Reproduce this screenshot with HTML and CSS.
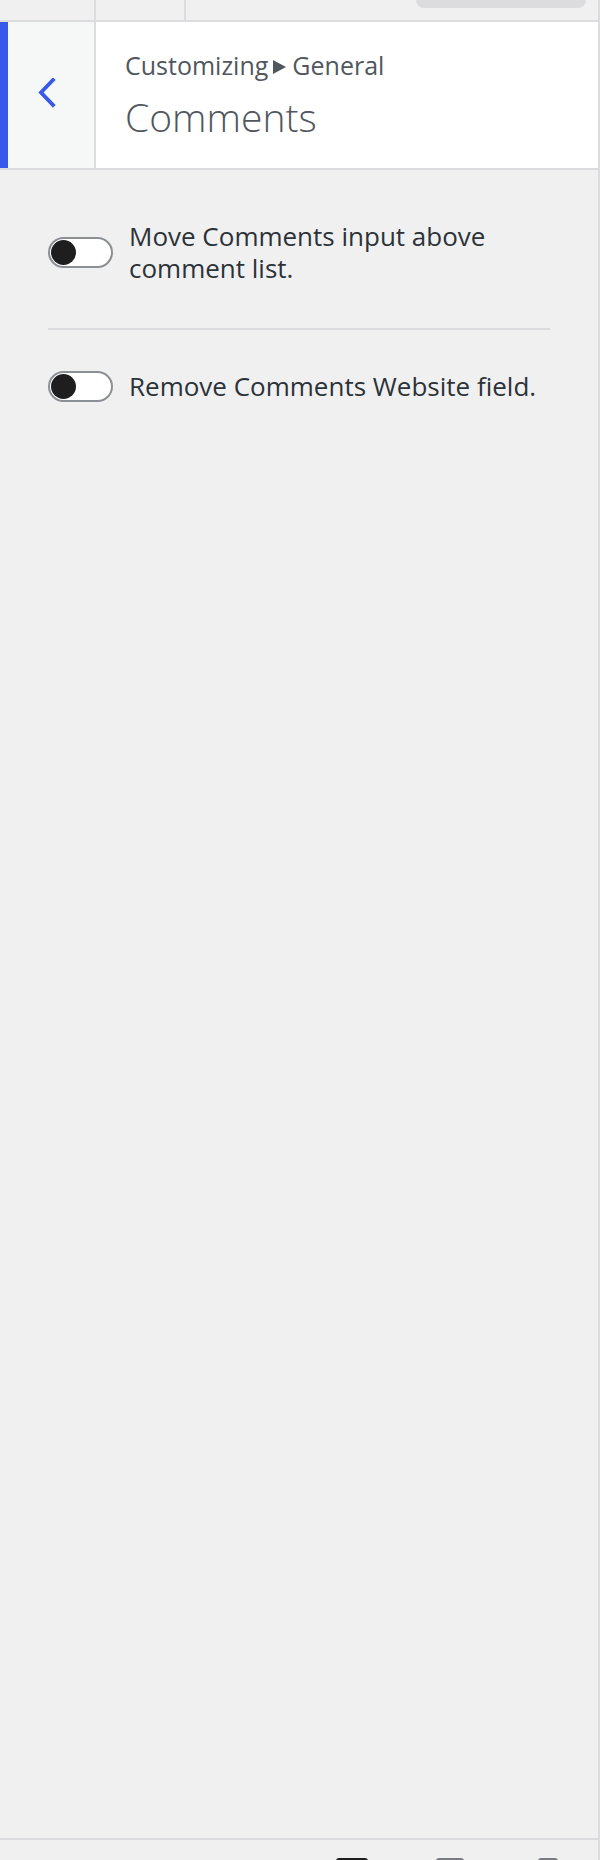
FILE: index.html
```html
<!DOCTYPE html>
<html lang="en">
<head>
<meta charset="utf-8">
<title>Customizing ▸ General — Comments</title>
<link rel="stylesheet" href="styles.css">
</head>
<body>
<div class="panel">
  <div class="topbar">
    <div class="tab tab-first"></div>
    <div class="tab tab-second"></div>
    <div class="topbar-pill"></div>
  </div>

  <div class="section-header">
    <button class="back" type="button" aria-label="Back">
      <svg width="18" height="30" viewBox="0 0 18 30" aria-hidden="true">
        <polyline points="15,2 3,14.5 15,27" fill="none" stroke="#3858e9" stroke-width="3.8" stroke-linecap="square" stroke-linejoin="miter"/>
      </svg>
    </button>
    <div class="title-block">
      <span class="crumb">Customizing<span class="crumb-sep" aria-label="▸"></span>General</span>
      <h3 class="section-title">Comments</h3>
    </div>
  </div>

  <div class="controls">
    <label class="control">
      <span class="toggle"><span class="knob"></span></span>
      <span class="control-label">Move Comments input above comment list.</span>
    </label>
    <hr class="divider">
    <label class="control">
      <span class="toggle"><span class="knob"></span></span>
      <span class="control-label">Remove Comments Website field.</span>
    </label>
  </div>

  <div class="footer">
    <span class="device device-desktop"></span>
    <span class="device device-tablet"></span>
    <span class="device device-mobile"></span>
  </div>
</div>
</body>
</html>
```
FILE: styles.css
```css
html, body {
  margin: 0;
  padding: 0;
  height: 1860px;
  overflow: hidden;
  background: #f0f0f1;
}

.panel {
  width: 598px;
  height: 1860px;
  border-right: 2px solid #dcdcde;
  display: flex;
  flex-direction: column;
  background: #f0f0f1;
}

/* top strip with tabs */
.topbar {
  height: 20px;
  flex: none;
  display: flex;
  border-bottom: 2px solid #dcdcde;
}
.tab {
  height: 20px;
  border-right: 2px solid #dcdcde;
}
.tab-first { width: 94px; }
.tab-second { width: 88px; }
.topbar-pill {
  margin-left: auto;
  margin-right: 12px;
  width: 170px;
  height: 8px;
  background: #dcdcde;
  border-radius: 0 0 8px 8px;
}

/* section header */
.section-header {
  height: 146px;
  flex: none;
  display: flex;
  border-bottom: 2px solid #dcdcde;
}
.back {
  width: 86px;
  margin: 0;
  padding: 0 0 4px 0;
  border: 0;
  border-left: 8px solid #3858e9;
  border-right: 2px solid #dcdcde;
  background: #f6f7f7;
  display: flex;
  align-items: center;
  justify-content: center;
  box-sizing: content-box;
}
.back svg { display: block; margin-left: -8px; }

.title-block {
  flex: 1;
  background: #fff;
  padding: 28px 0 0 29px;
  display: flex;
  flex-direction: column;
  font-family: "Open Sans", "Noto Sans", sans-serif;
  color: #50575e;
}
.crumb {
  font-size: 25px;
  line-height: 30px;
  font-weight: 400;
}
/* breadcrumb separator: small solid right-pointing triangle */
.crumb-sep {
  display: inline-block;
  width: 0;
  height: 0;
  border-left: 13px solid #50575e;
  border-top: 7px solid transparent;
  border-bottom: 7px solid transparent;
  margin: 0 6px 0 5px;
  vertical-align: 1px;
}
.section-title {
  margin: 14px 0 0 0;
  font-size: 39px;
  line-height: 46px;
  font-weight: 300;
}

/* toggle controls */
.controls {
  padding: 50px 48px 0 48px;
  font-family: "Open Sans", "Noto Sans", sans-serif;
  color: #2c3338;
}
.control {
  display: flex;
  align-items: center;
  gap: 16px;
}
.toggle {
  flex: none;
  width: 60px;
  height: 27px;
  border: 2px solid #8c8f94;
  border-radius: 16px;
  background: #fff;
  display: flex;
  align-items: center;
  padding-left: 1px;
}
.knob {
  width: 25px;
  height: 25px;
  border-radius: 50%;
  background: #1e1e1e;
}
.control-label {
  font-size: 26px;
  line-height: 32px;
}
.divider {
  border: 0;
  height: 2px;
  background: #dcdcde;
  margin: 44px 0 40px 0;
}

/* bottom device bar */
.footer {
  margin-top: auto;
  height: 2px;
  flex: none;
  border-top: 2px solid #dcdcde;
  display: flex;
  padding-top: 18px;
  overflow: hidden;
  box-sizing: content-box;
}
.device {
  display: block;
  flex: none;
  height: 24px;
  border-radius: 3px 3px 0 0;
}
.device-desktop { width: 32px; margin-left: 336px; background: #1e1e1e; }
.device-tablet { width: 28px; margin-left: 68px; background: #787c82; }
.device-mobile { width: 20px; margin-left: 74px; background: #787c82; }
```
